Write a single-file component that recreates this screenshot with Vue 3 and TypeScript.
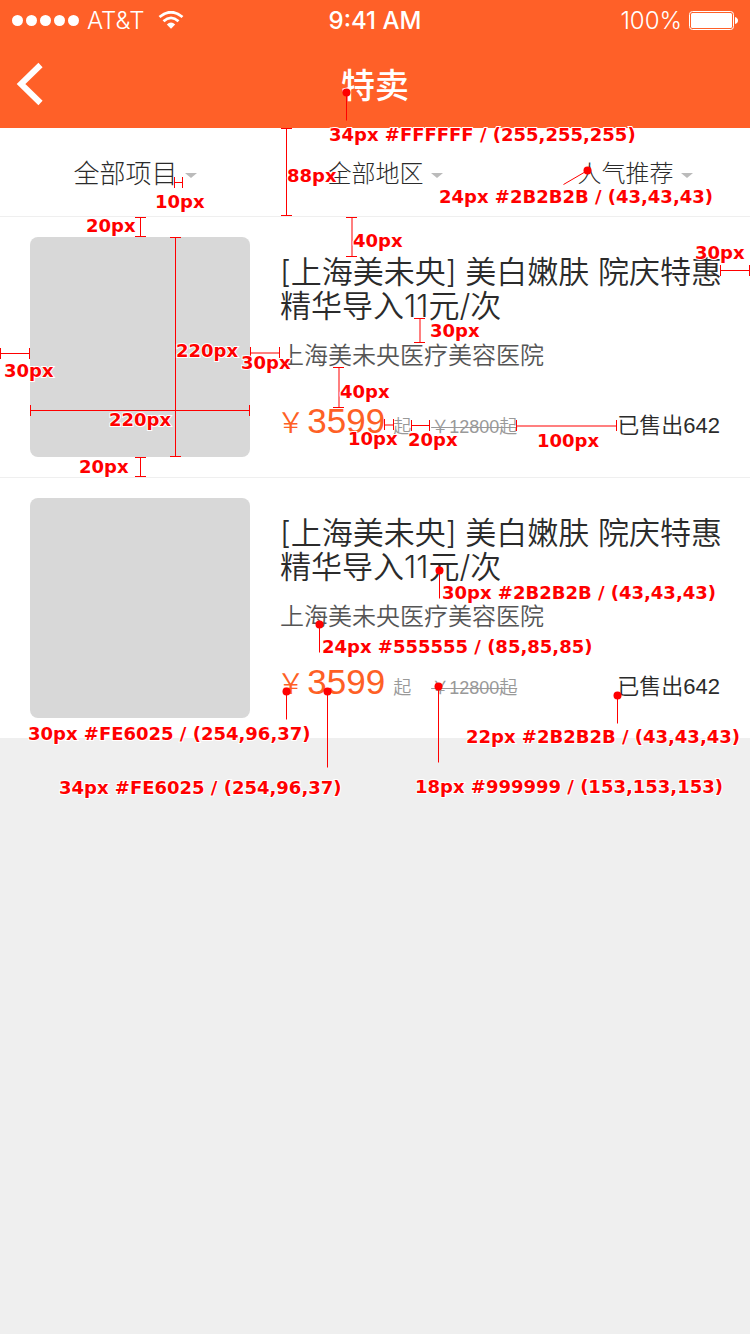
<script setup lang="ts">
interface Offer {
  id: number
  title: string
  clinic: string
  price: string
  original: string
  sold: number
}

interface Bar {
  x: number
  y: number
  length: number
  soft?: boolean
}

interface Leader {
  x: number
  y: number
  toX: number
  toY: number
}

interface Label {
  x: number
  y: number
  text: string
}

const filters: { label: string; large: boolean }[] = [
  { label: '全部项目', large: true },
  { label: '全部地区', large: false },
  { label: '人气推荐', large: false },
]

const offers: Offer[] = [1, 2].map((id) => ({
  id,
  title: '[上海美未央] 美白嫩肤 院庆特惠精华导入11元/次',
  clinic: '上海美未央医疗美容医院',
  price: '3599',
  original: '12800',
  sold: 642,
}))

const verticalBars: Bar[] = [
  { x: 286, y: 128, length: 88 },
  { x: 140, y: 217, length: 20 },
  { x: 351, y: 217, length: 40, soft: true },
  { x: 175, y: 237, length: 220 },
  { x: 140, y: 457, length: 20 },
  { x: 419, y: 318, length: 25, soft: true },
  { x: 338, y: 367, length: 41, soft: true },
]

const horizontalBars: Bar[] = [
  { x: 174, y: 182, length: 9 },
  { x: 720, y: 270, length: 30 },
  { x: 0, y: 353, length: 30 },
  { x: 250, y: 352, length: 30, soft: true },
  { x: 30, y: 410, length: 220 },
  { x: 384, y: 424, length: 10, soft: true },
  { x: 411, y: 425, length: 19 },
  { x: 516, y: 425, length: 101, soft: true },
]

const leaders: Leader[] = [
  { x: 346, y: 92, toX: 346, toY: 120 },
  { x: 587, y: 170, toX: 563, toY: 184 },
  { x: 439, y: 570, toX: 439, toY: 598 },
  { x: 319, y: 624, toX: 319, toY: 652 },
  { x: 286, y: 691, toX: 286, toY: 719 },
  { x: 327, y: 691, toX: 327, toY: 767 },
  { x: 438, y: 686, toX: 438, toY: 762 },
  { x: 617, y: 695, toX: 617, toY: 723 },
]

const labels: Label[] = [
  { x: 329, y: 141, text: '34px #FFFFFF / (255,255,255)' },
  { x: 287, y: 182, text: '88px' },
  { x: 155, y: 208, text: '10px' },
  { x: 439, y: 203, text: '24px #2B2B2B / (43,43,43)' },
  { x: 86, y: 232, text: '20px' },
  { x: 353, y: 247, text: '40px' },
  { x: 695, y: 259, text: '30px' },
  { x: 430, y: 337, text: '30px' },
  { x: 176, y: 357, text: '220px' },
  { x: 241, y: 369, text: '30px' },
  { x: 4, y: 377, text: '30px' },
  { x: 340, y: 398, text: '40px' },
  { x: 109, y: 426, text: '220px' },
  { x: 348, y: 445, text: '10px' },
  { x: 408, y: 446, text: '20px' },
  { x: 537, y: 447, text: '100px' },
  { x: 79, y: 473, text: '20px' },
  { x: 442, y: 599, text: '30px #2B2B2B / (43,43,43)' },
  { x: 322, y: 653, text: '24px #555555 / (85,85,85)' },
  { x: 28, y: 740, text: '30px #FE6025 / (254,96,37)' },
  { x: 466, y: 743, text: '22px #2B2B2B / (43,43,43)' },
  { x: 59, y: 794, text: '34px #FE6025 / (254,96,37)' },
  { x: 415, y: 793, text: '18px #999999 / (153,153,153)' },
]
</script>

<template>
  <div class="page">
    <header class="header">
      <div class="status">
        <div class="carrier">
          <span class="signal"><i v-for="n in 5" :key="n" class="dot"></i></span>
          <span class="status-text">AT&amp;T</span>
          <svg class="wifi" width="26" height="18" viewBox="0 0 26 18" aria-hidden="true">
            <path d="M1.500 6 Q13 -3.600 24.500 6" fill="none" stroke="#fff" stroke-width="2.800" />
            <path d="M5.500 10.200 Q13 3.600 20.500 10.200" fill="none" stroke="#fff" stroke-width="2.800" />
            <path d="M8.800 13.400 Q13 9.600 17.200 13.400 L13 17.800 Z" fill="#fff" />
          </svg>
        </div>
        <span class="clock status-text">9:41 AM</span>
        <div class="power">
          <span class="status-text">100%</span>
          <svg width="50" height="20" viewBox="0 0 50 20" aria-hidden="true">
            <rect x="1.500" y="1.500" width="44" height="18" rx="3" fill="none" stroke="#fff" />
            <rect x="3" y="3" width="41" height="15" rx="1.500" fill="#fff" />
            <path d="M47 7 Q50 8 50 10.500 Q50 13 47 14 Z" fill="#fff" />
          </svg>
        </div>
      </div>
      <div class="nav">
        <button class="back" type="button" aria-label="返回">
          <svg width="28" height="44" viewBox="0 0 28 44" aria-hidden="true">
            <path d="M24.500 3 L5 22 L24.500 41" fill="none" stroke="#fff" stroke-width="6" />
          </svg>
        </button>
        <h1 class="heading">特卖</h1>
      </div>
    </header>

    <nav class="filters">
      <button
        v-for="filter in filters"
        :key="filter.label"
        class="filter"
        :class="{ large: filter.large }"
        type="button"
      >
        <span>{{ filter.label }}</span>
        <i class="caret"></i>
      </button>
    </nav>

    <main>
      <article v-for="offer in offers" :key="offer.id" class="offer">
        <div class="thumb"></div>
        <div class="info">
          <h2 class="title">{{ offer.title }}</h2>
          <p class="clinic">{{ offer.clinic }}</p>
          <div class="prices">
            <span class="yen">￥</span>
            <span class="price">{{ offer.price }}</span>
            <span class="from">起</span>
            <s class="original">￥{{ offer.original }}起</s>
            <span class="sold">已售出{{ offer.sold }}</span>
          </div>
        </div>
      </article>
    </main>

    <svg class="notes" width="750" height="810" viewBox="0 0 750 810">
      <g fill="#f00">
        <g v-for="bar in verticalBars" :key="`v${bar.x}-${bar.y}`">
          <rect
            :x="bar.x"
            :y="bar.y"
            :width="bar.soft ? 2 : 1"
            :height="bar.length"
            :fill-opacity="bar.soft ? 0.5 : 1"
          />
          <rect :x="bar.x - 5" :y="bar.y" width="11" height="1" />
          <rect :x="bar.x - 5" :y="bar.y + bar.length - 1" width="11" height="1" />
        </g>
        <g v-for="bar in horizontalBars" :key="`h${bar.x}-${bar.y}`">
          <rect
            :x="bar.x"
            :y="bar.y"
            :width="bar.length"
            :height="bar.soft ? 2 : 1"
            :fill-opacity="bar.soft ? 0.5 : 1"
          />
          <rect :x="bar.x" :y="bar.y - 5" width="1" height="11" />
          <rect :x="bar.x + bar.length - 1" :y="bar.y - 5" width="1" height="11" />
        </g>
      </g>
      <g v-for="leader in leaders" :key="`l${leader.x}-${leader.y}`" transform="translate(0.5 0.5)">
        <line :x1="leader.x" :y1="leader.y" :x2="leader.toX" :y2="leader.toY" stroke="#f00" />
        <circle :cx="leader.x" :cy="leader.y" r="4" fill="#f00" />
      </g>
      <text v-for="label in labels" :key="`t${label.x}-${label.y}`" :x="label.x" :y="label.y" class="note">
        {{ label.text }}
      </text>
    </svg>
  </div>
</template>

<style>
body {
  margin: 0;
  background: #efefef;
}
</style>

<style scoped>
.page {
  position: relative;
  min-height: 100vh;
  overflow: hidden;
  background: #efefef;
  color: #2b2b2b;
  font-family: Inter, 'Noto Sans CJK SC', sans-serif;
  font-weight: 300;
}

button {
  border: 0;
  padding: 0;
  background: none;
  color: inherit;
  font: inherit;
  cursor: pointer;
}

h1,
h2,
p {
  margin: 0;
  font-weight: inherit;
}

.header {
  background: #ff6028;
  color: #fff;
}

.status {
  display: grid;
  grid-template-columns: 1fr auto 1fr;
  align-items: center;
  height: 40px;
  padding: 0 12px;
  font-size: 24px;
  line-height: 36px;
}

.status-text {
  padding-top: 2px;
}

.carrier {
  display: flex;
  align-items: center;
  gap: 8px;
}

.signal {
  display: flex;
  gap: 3px;
}

.dot {
  width: 11px;
  height: 11px;
  border-radius: 50%;
  background: #fff;
}

.wifi {
  margin-left: 6px;
}

.clock {
  font-weight: 500;
}

.power {
  display: flex;
  align-items: center;
  justify-content: flex-end;
  gap: 6px;
}

.nav {
  display: grid;
  grid-template-columns: 1fr auto 1fr;
  align-items: center;
  height: 88px;
  padding: 0 16px;
}

.back {
  display: flex;
  justify-self: start;
}

.heading {
  padding-top: 4px;
  font-size: 34px;
  font-weight: 500;
  line-height: 44px;
}

.filters {
  display: grid;
  grid-template-columns: repeat(3, 1fr);
  height: 88px;
  border-bottom: 1px solid #efefef;
  background: #fff;
}

.filter {
  display: flex;
  align-items: center;
  justify-content: center;
  gap: 7px;
  padding: 0 0 2px 20px;
  font-size: 24px;
}

.large {
  font-size: 26px;
}

.caret {
  margin-top: 8px;
  border: solid transparent;
  border-width: 5px 6px 0;
  border-top-color: #bbb;
}

.offer {
  display: flex;
  gap: 30px;
  padding: 20px 20px 20px 30px;
  background: #fff;
}

.offer + .offer {
  border-top: 1px solid #efefef;
}

.thumb {
  flex: none;
  width: 220px;
  height: 220px;
  border-radius: 8px;
  background: #d8d8d8;
}

.info {
  flex: 1;
  min-width: 0;
  padding-top: 18px;
  font-family: Inter, 'Noto Sans CJK SC DemiLight', 'Noto Sans CJK SC', sans-serif;
  font-weight: 350;
}

.title {
  font-size: 31px;
  line-height: 34px;
}

.clinic {
  margin-top: 16px;
  color: #555;
  font-size: 24px;
  line-height: 34px;
}

.prices {
  display: flex;
  align-items: baseline;
  margin-top: 26px;
  padding-right: 10px;
  font-family: 'Liberation Sans', 'Noto Sans CJK SC', sans-serif;
  line-height: 44px;
}

.yen {
  margin-right: 6px;
  color: #fe6025;
  font-size: 28px;
  font-feature-settings: 'palt';
}

.price {
  color: #fe6025;
  font-size: 35px;
}

.from,
.original {
  color: #999;
  font-size: 18px;
}

.from {
  margin-left: 8px;
}

.original {
  margin-left: 20px;
}

.sold {
  margin-left: auto;
  font-size: 22px;
}

.notes {
  position: absolute;
  top: 0;
  left: 0;
  pointer-events: none;
}

.note {
  fill: #f00;
  stroke: #fff;
  stroke-width: 2px;
  paint-order: stroke;
  font-family: 'DejaVu Sans', sans-serif;
  font-size: 18px;
  font-weight: 700;
}
</style>
